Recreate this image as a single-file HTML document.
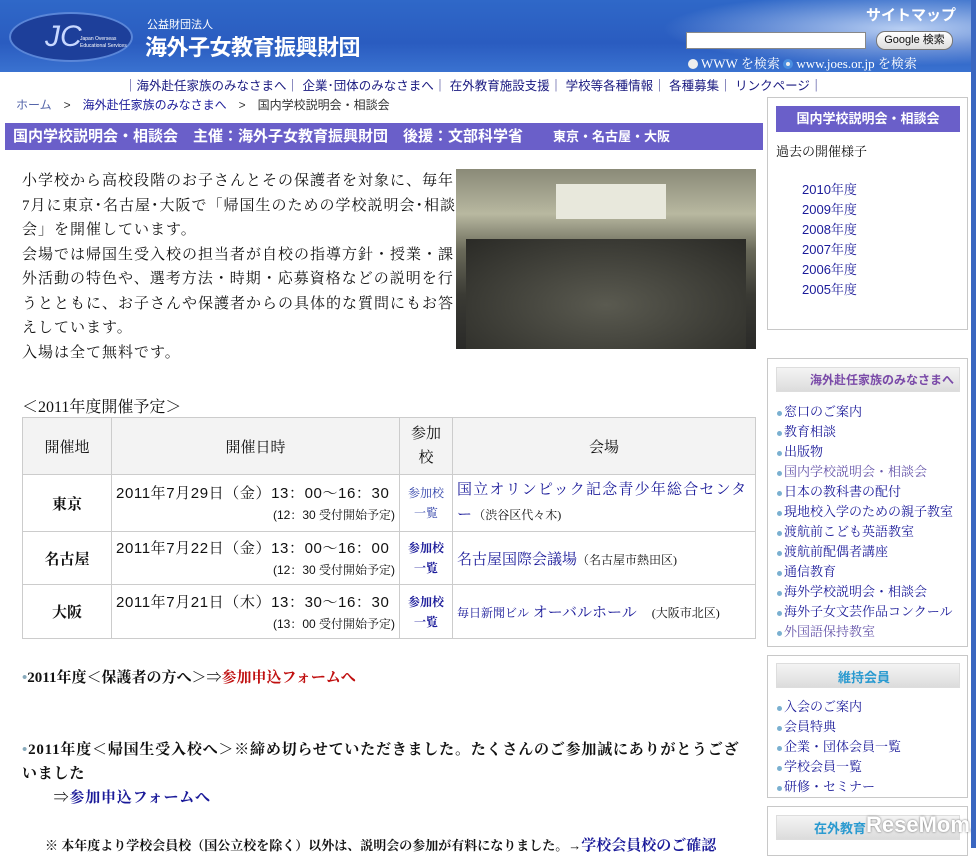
<!DOCTYPE html>
<html><head><meta charset="utf-8"><style>
*{margin:0;padding:0;box-sizing:border-box}
body{width:976px;height:848px;overflow:hidden;background:#fff;position:relative;font-family:"Liberation Serif","Noto Serif CJK SC",serif;color:#111}
.a{position:absolute;white-space:nowrap}
.sans{font-family:"Liberation Sans","Noto Sans CJK JP",sans-serif}
.dg{font-family:"Liberation Sans","Noto Serif CJK SC",serif}
#hd{position:absolute;left:0;top:0;width:976px;height:72px;background:linear-gradient(180deg,#2f68c8 0%,#2a5cc0 60%,#3a72d0 100%)}
.blue{color:#1a1a99}
td,th{border:1px solid #ccc}
table{border-collapse:collapse;position:absolute;left:22px;top:417px;width:734px;font-size:15px}
.box{position:absolute;left:767px;width:201px;border:1px solid #c8c8c8;background:#fff}
.sl{position:absolute;left:777px;font-size:13px;color:#1a1a99;white-space:nowrap}
.sl:before{content:"";display:inline-block;width:5px;height:5px;border-radius:50%;background:#7ab0d0;margin-right:2px;vertical-align:middle}
.hdimg{position:absolute;left:776px;width:184px;height:25px;background:linear-gradient(180deg,#f4f4f4,#dcdcdc);border:1px solid #ddd}
</style></head><body>
<div id="hd">
 <div style="position:absolute;left:620px;top:0;width:356px;height:72px;background:radial-gradient(ellipse at 80% 40%,rgba(220,235,255,.8),rgba(255,255,255,0) 60%)"></div>
 <div style="position:absolute;left:9px;top:12px;width:124px;height:50px;border-radius:50%;background:#1d3f9a;border:2px solid #5a86d8"></div>
 <div class="a sans" style="left:45px;top:20px;font-size:30px;color:#c8d8ff;font-style:italic">JC</div>
 <div class="a sans" style="left:80px;top:36px;font-size:5px;color:#fff;line-height:7px">Japan Overseas<br>Educational Services</div>
 <div class="a sans" style="left:147px;top:16px;font-size:11px;color:#fff">公益財団法人</div>
 <div class="a sans" style="left:145px;top:30px;font-size:22px;font-weight:bold;color:#fff;letter-spacing:-0.5px">海外子女教育振興財団</div>
 <div class="a sans" style="left:866px;top:4px;font-size:15px;font-weight:bold;color:#fff">サイトマップ</div>
 <div style="position:absolute;left:686px;top:32px;width:180px;height:17px;background:#fff;border:1px solid #888"></div>
 <div class="a sans" style="left:876px;top:31px;width:77px;height:19px;background:linear-gradient(#fff,#ddd);border:1px solid #777;border-radius:9px;font-size:11px;text-align:center;line-height:17px;color:#111">Google 検索</div>
 <div class="a" style="left:688px;top:53px;font-size:13px;color:#fff"><span style="display:inline-block;width:10px;height:10px;border-radius:50%;background:#eee;vertical-align:-1px"></span> WWW を検索 <span style="display:inline-block;width:10px;height:10px;border-radius:50%;background:#eee;border:3px solid #4a8ee0;vertical-align:-1px"></span> www.joes.or.jp を検索</div>
</div>
<div class="a sans" style="left:124px;top:75px;font-size:12.5px;color:#1a1a80">｜海外赴任家族のみなさまへ｜ 企業･団体のみなさまへ｜ 在外教育施設支援｜ 学校等各種情報｜ 各種募集｜ リンクページ｜</div>
<div class="a sans" style="left:16px;top:96px;font-size:12px;color:#333"><span style="color:#5566aa">ホーム</span>　&gt;　<span class="blue">海外赴任家族のみなさまへ</span>　&gt;　国内学校説明会・相談会</div>
<div class="a sans" style="left:5px;top:123px;width:758px;height:27px;background:#6a5fc9;color:#fff;font-size:15px;font-weight:bold;line-height:27px;padding-left:8px">国内学校説明会・相談会　主催：海外子女教育振興財団　後援：文部科学省　　<span style="font-size:13px">東京・名古屋・大阪</span></div>
<div style="position:absolute;left:22px;top:169px;width:436px;font-size:15px;line-height:24.5px;letter-spacing:1px">小学校から高校段階のお子さんとその保護者を対象に、毎年7月に東京･名古屋･大阪で「帰国生のための学校説明会･相談会」を開催しています。<br>会場では帰国生受入校の担当者が自校の指導方針・授業・課外活動の特色や、選考方法・時期・応募資格などの説明を行うとともに、お子さんや保護者からの具体的な質問にもお答えしています。<br>入場は全て無料です。</div>
<div style="position:absolute;left:456px;top:169px;width:300px;height:180px;background:linear-gradient(180deg,#8a8a78 0%,#b8b8a0 25%,#6a6a5a 45%,#3a3a34 70%,#2a2a28 100%)">
 <div style="position:absolute;left:100px;top:15px;width:110px;height:35px;background:#e8e8dc"></div>
 <div style="position:absolute;left:10px;top:70px;width:280px;height:110px;background:radial-gradient(ellipse at 50% 60%,#5a5a50,#2a2a26)"></div>
</div>
<div class="a" style="left:22px;top:394px;font-size:16px">＜2011年度開催予定＞</div>
<table>
<tr style="background:#f3f3f3;height:57px"><td style="width:89px;text-align:center">開催地</td><td style="width:288px;text-align:center">開催日時</td><td style="width:53px;text-align:center;line-height:24px">参加<br>校</td><td style="text-align:center">会場</td></tr>
<tr style="height:57px"><td style="text-align:center;font-weight:bold">東京</td><td class="dg" style="padding:0 4px;line-height:24px;letter-spacing:0.6px;white-space:nowrap">2011年7月29日（金）13：00〜16：30<div style="text-align:right;font-size:12px;line-height:18px;letter-spacing:0">(12：30 受付開始予定)</div></td><td style="text-align:center;font-size:12px;line-height:20px;color:#3344aa">参加校<br>一覧</td><td style="padding:0 4px;line-height:25px;color:#1a1a99;letter-spacing:1.2px">国立オリンピック記念青少年総合センター<span style="font-size:12px;color:#111;letter-spacing:0">（渋谷区代々木)</span></td></tr>
<tr style="height:53px"><td style="text-align:center;font-weight:bold">名古屋</td><td class="dg" style="padding:0 4px;line-height:24px;letter-spacing:0.6px;white-space:nowrap">2011年7月22日（金）13：00〜16：00<div style="text-align:right;font-size:12px;line-height:18px;letter-spacing:0">(12：30 受付開始予定)</div></td><td style="text-align:center;font-size:12px;line-height:20px;color:#1a1a99;font-weight:bold">参加校<br>一覧</td><td style="padding:0 4px;color:#1a1a99">名古屋国際会議場<span style="font-size:12px;color:#111">（名古屋市熱田区)</span></td></tr>
<tr style="height:54px"><td style="text-align:center;font-weight:bold">大阪</td><td class="dg" style="padding:0 4px;line-height:24px;letter-spacing:0.6px;white-space:nowrap">2011年7月21日（木）13：30〜16：30<div style="text-align:right;font-size:12px;line-height:18px;letter-spacing:0">(13：00 受付開始予定)</div></td><td style="text-align:center;font-size:12px;line-height:20px;color:#1a1a99;font-weight:bold">参加校<br>一覧</td><td style="padding:0 4px;color:#1a1a99"><span style="font-size:12px">毎日新聞ビル</span> オーバルホール　<span style="font-size:12px;color:#111">(大阪市北区)</span></td></tr>
</table>
<div class="a" style="left:22px;top:666px;font-size:15px;font-weight:bold"><span style="color:#8ab">•</span>2011年度＜保護者の方へ＞⇒<span style="color:#c01010">参加申込フォームへ</span></div>
<div style="position:absolute;left:22px;top:738px;width:730px;font-size:15px;font-weight:bold;line-height:24px;letter-spacing:0.8px"><span style="color:#8ab">•</span>2011年度＜帰国生受入校へ＞※締め切らせていただきました。たくさんのご参加誠にありがとうございました<br>　　⇒<span style="color:#1a1a99">参加申込フォームへ</span></div>
<div class="a" style="left:45px;top:834px;font-size:13px;font-weight:bold">※ 本年度より学校会員校（国公立校を除く）以外は、説明会の参加が有料になりました。→<span style="color:#1a1a99;font-size:15px">学校会員校のご確認</span></div>

<div class="box" style="top:97px;height:233px"></div>
<div class="a sans" style="left:776px;top:106px;width:184px;height:26px;background:#6a5fc9;color:#fff;font-size:13px;font-weight:bold;text-align:center;line-height:26px">国内学校説明会・相談会</div>
<div class="a" style="left:776px;top:141px;font-size:13px">過去の開催様子</div>
<div class="a blue dg" style="left:802px;top:180px;font-size:13px;line-height:20px">2010年度<br>2009年度<br>2008年度<br>2007年度<br>2006年度<br>2005年度</div>

<div class="box" style="top:358px;height:289px"></div>
<div class="hdimg" style="top:367px"></div>
<div class="a sans" style="left:810px;top:371px;font-size:12px;font-weight:bold;color:#7a4aa8">海外赴任家族のみなさまへ</div>
<div class="sl" style="top:401px">窓口のご案内</div><div class="sl" style="top:421px">教育相談</div><div class="sl" style="top:441px">出版物</div><div class="sl" style="top:461px;color:#6655aa">国内学校説明会・相談会</div><div class="sl" style="top:481px">日本の教科書の配付</div><div class="sl" style="top:501px">現地校入学のための親子教室</div><div class="sl" style="top:521px">渡航前こども英語教室</div><div class="sl" style="top:541px">渡航前配偶者講座</div><div class="sl" style="top:561px">通信教育</div><div class="sl" style="top:581px">海外学校説明会・相談会</div><div class="sl" style="top:601px">海外子女文芸作品コンクール</div><div class="sl" style="top:621px;color:#6655aa">外国語保持教室</div>

<div class="box" style="top:655px;height:143px"></div>
<div class="hdimg" style="top:663px"></div>
<div class="a sans" style="left:838px;top:667px;font-size:13px;font-weight:bold;color:#2a9ad0">維持会員</div>
<div class="sl" style="top:696px">入会のご案内</div><div class="sl" style="top:716px">会員特典</div><div class="sl" style="top:736px">企業・団体会員一覧</div><div class="sl" style="top:756px">学校会員一覧</div><div class="sl" style="top:776px">研修・セミナー</div>

<div class="box" style="top:806px;height:50px"></div>
<div class="hdimg" style="top:815px"></div>
<div class="a sans" style="left:814px;top:818px;font-size:13px;font-weight:bold;color:#2a9ad0">在外教育</div>
<div class="a sans" style="left:866px;top:812px;font-size:22px;font-weight:bold;color:#fff;text-shadow:0 0 2px #666">ReseMom.</div>
<div style="position:absolute;left:971px;top:0;width:5px;height:848px;background:#3a66c0"></div>
</body></html>
